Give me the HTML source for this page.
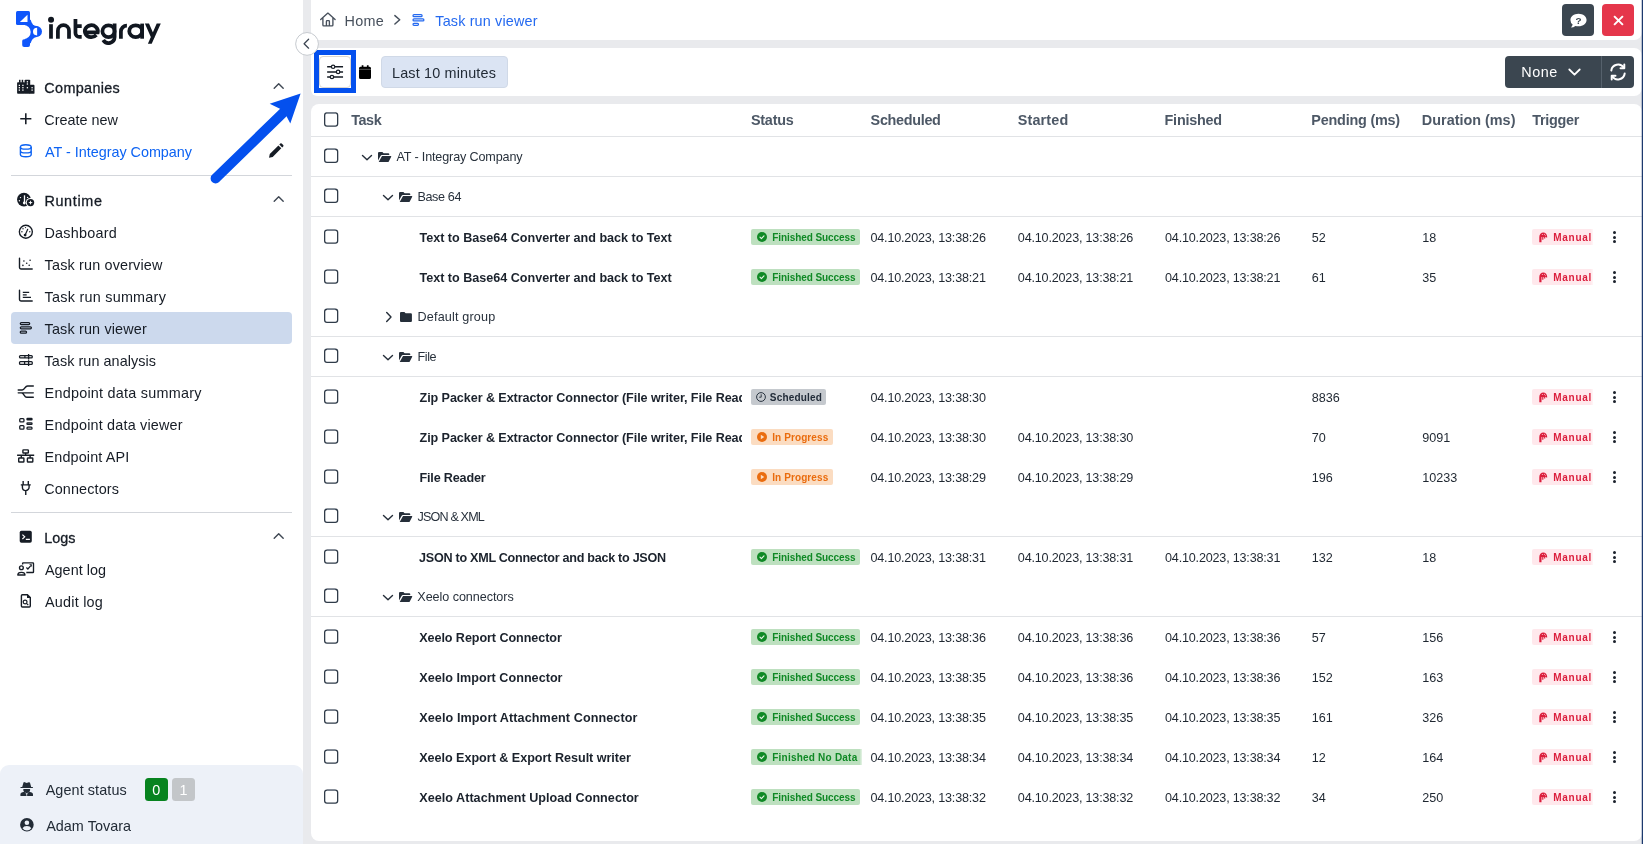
<!DOCTYPE html>
<html lang="en">
<head>
<meta charset="utf-8">
<title>Task run viewer</title>
<style>
*{box-sizing:border-box;margin:0;padding:0}
html,body{width:1643px;height:844px;overflow:hidden}
body{position:relative;background:#e9eaed;font-family:"Liberation Sans",sans-serif;color:#1b222c;font-size:14px}
#app{position:absolute;left:0;top:0;width:1643px;height:844px;overflow:hidden;will-change:transform}
.abs{position:absolute}
svg{display:block;overflow:visible}
.t{position:absolute;line-height:20px;white-space:nowrap}
.hd{-webkit-text-stroke:.3px #161c25}
.cb{position:absolute;left:324px;width:15px;height:15px;border:1.5px solid #39424e;border-radius:3px;background:#fff}
.ln{position:absolute;left:311px;width:1332px;height:1px;background:#e1e3e6}
.bdg{position:absolute;left:751px;height:16px;border-radius:2px}
.dots{position:absolute;left:1612px;width:4px;height:12px}
.dots i{position:absolute;left:.5px;width:3px;height:3px;border-radius:50%;background:#1b222c}
</style>
</head>
<body>
<div id="app">
<div class="abs" style="left:0px;top:0px;width:303px;height:844px;background:#fff"></div>
<div class="abs" style="left:311px;top:0px;width:1331px;height:40px;background:#fff;border-radius:0 0 8px 8px"></div>
<div class="abs" style="left:311px;top:48px;width:1331px;height:48px;background:#fff;border-radius:6px 8px 8px 6px"></div>
<div class="abs" style="left:311px;top:103.6px;width:1331px;height:737.4px;background:#fff;border-radius:8px"></div>
<div class="abs" style="left:0px;top:765px;width:303px;height:79px;background:#edf1f8;border-radius:9px 9px 0 0"></div>
<div class="abs" style="left:11px;top:312px;width:281px;height:31.5px;background:#ccd9ed;border-radius:4px"></div>
<div class="abs" style="left:11px;top:175px;width:281px;height:1px;background:#d3d6db"></div>
<div class="abs" style="left:11px;top:512px;width:281px;height:1px;background:#d3d6db"></div>
<svg class="abs" style="left:0;top:0" width="175" height="56" viewBox="0 0 175 56">
<path d="M25 24L30 19.5L38 27v9L30 43.5L25 40z" fill="#0f56fb"/>
<g fill="#fff"><circle cx="23.6" cy="32.1" r="7.1"/><circle cx="37.3" cy="19.6" r="6.4"/><circle cx="37.3" cy="43.5" r="6.4"/></g>
<g fill="#0f56fb">
<rect x="16" y="10.9" width="14" height="14.1" rx="1.5"/>
<circle cx="36.65" cy="31.45" r="5.35"/>
<rect x="22.2" y="39.2" width="7.8" height="7.7" rx="1.9"/>
</g>
<path d="M19.9 22.1l7.6-7.3v7.3z" fill="#fff"/>
<path d="M37.1 27.7a4.1 3.85 0 0 0 0 7.7z" fill="#fff"/>
<g fill="none" stroke="#111720" stroke-width="3.75">
<path d="M51 24.2V38.7"/>
<path d="M57.9 38.7V30.8A5.55 5.55 0 0 1 69 30.8V38.7"/>
<path d="M75.45 19.1V33.1A3.8 3.8 0 0 0 79.25 36.9H81.7M75.45 26H81.7"/>
<path d="M85.2 32.3H97.74A6.5 5.95 0 1 0 96.33 35.02"/>
<ellipse cx="108.5" cy="31.2" rx="6.1" ry="5.95"/>
<path d="M114.6 23.6V37A6.15 6.15 0 0 1 103.2 40.1"/>
<path d="M120.9 38.7V31.6A6 6 0 0 1 126.9 25.6"/>
<ellipse cx="135.7" cy="31.2" rx="6.45" ry="5.95"/>
<path d="M142.15 23.6V38.7"/>
</g>
<path d="M144.9 23.4h4.1l6 13.9h-4.1zM156.7 23.4h4.1l-9.1 20.4h-3.8z" fill="#111720"/>
<circle cx="51.05" cy="19.7" r="3" fill="#111720"/>
</svg>
<div class="t hd" style="left:44.34px;top:78px;font-size:14.4px;letter-spacing:0.336px;color:#161c25;">Companies</div>
<div class="t" style="left:44.34px;top:110px;font-size:14.4px;letter-spacing:-0.008px;color:#161c25;">Create new</div>
<div class="t" style="left:45.00px;top:142px;font-size:14.4px;letter-spacing:-0.021px;color:#0d63f3;">AT - Integray Company</div>
<div class="t hd" style="left:44.45px;top:191px;font-size:14.4px;letter-spacing:0.643px;color:#161c25;">Runtime</div>
<div class="t" style="left:44.45px;top:223px;font-size:14.4px;letter-spacing:0.242px;color:#161c25;">Dashboard</div>
<div class="t" style="left:44.61px;top:255px;font-size:14.4px;letter-spacing:0.163px;color:#161c25;">Task run overview</div>
<div class="t" style="left:44.61px;top:287px;font-size:14.4px;letter-spacing:0.245px;color:#161c25;">Task run summary</div>
<div class="t" style="left:44.61px;top:319px;font-size:14.4px;letter-spacing:0.154px;color:#161c25;">Task run viewer</div>
<div class="t" style="left:44.61px;top:351px;font-size:14.4px;letter-spacing:0.059px;color:#161c25;">Task run analysis</div>
<div class="t" style="left:44.60px;top:383px;font-size:14.4px;letter-spacing:0.245px;color:#161c25;">Endpoint data summary</div>
<div class="t" style="left:44.60px;top:415px;font-size:14.4px;letter-spacing:0.185px;color:#161c25;">Endpoint data viewer</div>
<div class="t" style="left:44.60px;top:447px;font-size:14.4px;letter-spacing:0.13px;color:#161c25;">Endpoint API</div>
<div class="t" style="left:44.18px;top:479px;font-size:14.4px;letter-spacing:0.13px;color:#161c25;">Connectors</div>
<div class="t hd" style="left:44.25px;top:528px;font-size:14.4px;letter-spacing:-0.019px;color:#161c25;">Logs</div>
<div class="t" style="left:44.90px;top:560px;font-size:14.4px;letter-spacing:0.045px;color:#161c25;">Agent log</div>
<div class="t" style="left:44.90px;top:592px;font-size:14.4px;letter-spacing:0.248px;color:#161c25;">Audit log</div>
<svg class="abs" style="left:0;top:0" width="303" height="844" viewBox="0 0 303 844">
<g fill="#161c25"><rect x="17.1" y="82.3" width="8" height="11.5" rx=".8"/><rect x="19" y="79.8" width="1.5" height="3"/><rect x="21.7" y="79.8" width="1.5" height="3"/><rect x="24.6" y="79.7" width="5.6" height="14.1" rx=".9"/><rect x="29.5" y="84.8" width="5" height="9" rx=".9"/></g>
<g fill="#fff"><rect x="18.70" y="84.75" width="1.3" height="1.3"/><rect x="18.70" y="87.05" width="1.3" height="1.3"/><rect x="18.70" y="89.45" width="1.3" height="1.3"/><rect x="22.25" y="84.75" width="1.3" height="1.3"/><rect x="22.25" y="87.05" width="1.3" height="1.3"/><rect x="22.25" y="89.45" width="1.3" height="1.3"/><rect x="26.75" y="81.15" width="1.3" height="1.3"/><rect x="26.75" y="83.35" width="1.3" height="1.3"/><rect x="26.75" y="87.05" width="1.3" height="1.3"/><rect x="31.45" y="87.05" width="1.3" height="1.3"/><rect x="31.45" y="89.45" width="1.3" height="1.3"/></g>
<path d="M25.8 113.2v11.1M20.25 118.75h11.1" stroke="#161c25" stroke-width="1.55" fill="none"/>
<g fill="none" stroke="#0d63f3" stroke-width="1.4"><ellipse cx="25.8" cy="146.9" rx="5.4" ry="2.2"/><path d="M20.4 146.9v7.6c0 1.2 2.4 2.2 5.4 2.2s5.4-1 5.4-2.2v-7.6M20.4 150.7c0 1.2 2.4 2.2 5.4 2.2s5.4-1 5.4-2.2"/></g>
<circle cx="23.95" cy="199.6" r="6.9" fill="#161c25"/><path d="M24.5 195.3v7" stroke="#fff" stroke-width="1.3"/><circle cx="24.3" cy="203" r="1.4" fill="#fff"/><g fill="#fff"><circle cx="20.5" cy="197.6" r=".7"/><circle cx="27.6" cy="197.4" r=".7"/><circle cx="19.4" cy="200.8" r=".7"/></g>
<circle cx="30.5" cy="202.6" r="4.7" fill="#fff"/><circle cx="30.5" cy="202.6" r="3.7" fill="#161c25"/><path d="M30.5 200.3l.6 1.7 1.7.6-1.7.6-.6 1.7-.6-1.7-1.7-.6 1.7-.6z" fill="#fff"/>
<g fill="none" stroke="#161c25" stroke-width="1.35"><circle cx="25.85" cy="231.75" r="6.5"/><path d="M25.3 234.8l2.4-5.5" stroke-width="1.2" stroke-linecap="round"/></g><circle cx="25.1" cy="235.1" r="1.4" fill="#161c25"/><g fill="#161c25"><circle cx="21.9" cy="231.8" r=".7"/><circle cx="23" cy="228.8" r=".7"/><circle cx="25.5" cy="227.6" r=".7"/><circle cx="29.8" cy="231.8" r=".7"/></g>
<g fill="none" stroke="#161c25" stroke-width="1.4" stroke-linecap="round"><path d="M19.5 258.3v9.3q0 1.4 1.4 1.4h11.3"/><path d="M19.5 290.3v9.3q0 1.4 1.4 1.4h11.3"/><path d="M22.8 292.4h6.4M22.8 294.9h3.9M22.8 297.4h8.2" stroke-width="1.3" stroke-linecap="butt"/></g>
<g fill="#161c25"><circle cx="23.9" cy="261" r=".8"/><circle cx="30.1" cy="260.2" r=".8"/><circle cx="26.7" cy="263.3" r=".8"/><circle cx="22.9" cy="265.4" r=".8"/><circle cx="29.2" cy="265.3" r=".8"/></g>
<g fill="none" stroke="#161c25" stroke-width="1.25"><rect x="20.3" y="322.55" width="9.4" height="2" rx="1"/><rect x="20.3" y="326.8" width="11.1" height="2" rx="1"/><rect x="20.3" y="331.15" width="6.2" height="1.95" rx=".97"/></g>
<g fill="none" stroke="#161c25" stroke-width="1.3"><rect x="19.55" y="355.55" width="12.7" height="2.4" rx=".9"/><rect x="19.55" y="361.65" width="12.7" height="2.7" rx=".9"/><path d="M24.9 355.5v2.5M28.6 354v5.6M24.6 361.6v2.8M28.6 360.2v5.7"/></g>
<path d="M18.2 390h4c2.8 0 2.6-4.05 5.4-4.05h5.7M18.2 392.85h15.1M21.4 392.85c2.8 0 2.6 4.35 5.4 4.35h6.5" fill="none" stroke="#161c25" stroke-width="1.4" stroke-linecap="round"/>
<g fill="none" stroke="#161c25" stroke-width="1.3"><rect x="19.75" y="418.55" width="4.2" height="3.4" rx=".9"/><rect x="19.75" y="425.65" width="4.2" height="3.4" rx=".9"/><rect x="26.95" y="418.5" width="5.1" height="1.3" rx=".65"/><rect x="26.95" y="422.9" width="5.1" height="1.5" rx=".75"/><rect x="26.95" y="427.2" width="5.1" height="1.9" rx=".95"/></g>
<g fill="none" stroke="#161c25" stroke-width="1.4"><rect x="22.9" y="449.9" width="5.45" height="3.1" rx=".6"/><path d="M17.1 455.3h17.1M25.65 453v2.3M21.3 455.3v2.7M30.1 455.3v2.7"/><rect x="18.7" y="458" width="5.2" height="4" rx=".6"/><rect x="27.4" y="458" width="5.4" height="4" rx=".6"/></g>
<path d="M23.15 481.1v3.3M28.3 481.1v3.3M20.8 484.9h9.95M22.4 485v2.25a3.35 3.35 0 0 0 6.7 0V485M25.75 490.8v4.1" fill="none" stroke="#161c25" stroke-width="1.4"/>
<rect x="19.7" y="530.7" width="12.1" height="12.05" rx="1.7" fill="#161c25"/><path d="M22.4 534.65l2.3 2.2-2.3 2.2M25.8 539.3h4.1" fill="none" stroke="#fff" stroke-width="1.2"/>
<g fill="none" stroke="#161c25" stroke-width="1.35"><path d="M22.6 564.6v-1.1q0-.6.6-.6h9.7q.6 0 .6.6v8.4q0 .6-.6.6H26.3"/><circle cx="21.4" cy="567.7" r="1.9"/><path d="M17.8 575q0-2.7 3.6-2.7t3.6 2.7z" stroke-linejoin="round"/><path d="M26.4 567.5l1.5 1.5 2.7-3.2" stroke-width="1.2"/></g><path d="M29.2 564.3h2.6v2.6z" fill="#161c25"/>
<g fill="none" stroke="#161c25" stroke-width="1.4"><path d="M22.4 594.7h5l2.9 2.9v8.4q0 1-1 1h-6.9q-1 0-1-1v-10.3q0-1 1-1z"/><circle cx="25.1" cy="602" r="1.9" stroke-width="1.2"/><path d="M26.5 603.4l1.8 1.7" stroke-width="1.2"/></g><path d="M27 594.3v3.7h3.7z" fill="#161c25"/>
<path d="M274.2 88.20l4.5-4.5 4.5 4.5" fill="none" stroke="#3f4753" stroke-width="1.4" stroke-linecap="round" stroke-linejoin="round"/><path d="M274.2 201.30l4.5-4.5 4.5 4.5" fill="none" stroke="#3f4753" stroke-width="1.4" stroke-linecap="round" stroke-linejoin="round"/><path d="M274.2 538.20l4.5-4.5 4.5 4.5" fill="none" stroke="#3f4753" stroke-width="1.4" stroke-linecap="round" stroke-linejoin="round"/>
<path fill="#161c25" d="M269 157.7l.8-3.7 8.6-8.6 2.9 2.9-8.6 8.6zM279.3 144.5l1-1q.7-.7 1.4 0l1.5 1.5q.7.7 0 1.4l-1 1z"/>
<path fill="#222b36" d="M22.2 787l1.2-4.2q.3-.9 1.2-.6l1.5.6q.6.2 1.2 0l1.5-.6q.9-.3 1.2.6l1.2 4.2h1.3q.5 0 .5.5t-.5.5H20.9q-.5 0-.5-.5t.5-.5zM23.6 789h6.2q.4 0 .4.4 0 1.4-.9 2.3l2.4.8q1.3.5 1.3 1.9v1.1q0 .5-.5.5H20.9q-.5 0-.5-.5v-1.1q0-1.4 1.3-1.9l2.4-.8q-.9-.9-.9-2.3 0-.4.4-.4z"/><path d="M25.5 792.7l1.2 1.2 1.2-1.2M26.7 793.9v1.8" stroke="#edf1f8" stroke-width=".9" fill="none"/>
<circle cx="26.9" cy="824.7" r="6.8" fill="#222b36"/><circle cx="26.9" cy="822.8" r="2.3" fill="#edf1f8"/><path d="M22.5 828.3q1.1-2.2 4.4-2.2t4.4 2.2q-1.7 2.2-4.4 2.2t-4.4-2.2z" fill="#edf1f8"/>
</svg>
<div class="t" style="left:45.67px;top:780px;font-size:14.4px;letter-spacing:0.093px;color:#222b36;">Agent status</div>
<div class="abs" style="left:145px;top:778px;width:23px;height:23px;background:#07831f;border-radius:3.5px"></div>
<div class="abs" style="left:172px;top:778px;width:23px;height:23px;background:#c3c6c9;border-radius:3.5px"></div>
<div class="t" style="left:152.16px;top:780px;font-size:14.4px;letter-spacing:0.0px;color:#fff;">0</div>
<div class="t" style="left:179.42px;top:780px;font-size:14.4px;letter-spacing:0.0px;color:#fff;">1</div>
<div class="t" style="left:46.15px;top:816px;font-size:14.4px;letter-spacing:0.035px;color:#222b36;">Adam Tovara</div>
<svg class="abs" style="left:318px;top:8px" width="110" height="24" viewBox="318 8 110 24"><g fill="none" stroke="#47505c" stroke-width="1.35" stroke-linecap="round" stroke-linejoin="round"><path d="M320.7 19.5L327.9 13.1L335.1 19.5M322.9 18.3V25q0 .9.9.9h8.2q.9 0 .9-.9V18.3M326.4 25.9v-4.5q0-.7.7-.7h1.6q.7 0 .7.7v4.5"/><path d="M394.9 15.6L399.7 19.8L394.9 24" stroke-width="1.5"/></g><g fill="none" stroke="#256af0" stroke-width="1.25"><rect x="413" y="14.7" width="9.1" height="2" rx="1"/><rect x="413" y="18.95" width="10.9" height="2" rx="1"/><rect x="413" y="23.3" width="5.5" height="1.95" rx=".97"/></g></svg>
<div class="t" style="left:344.45px;top:11px;font-size:14.4px;letter-spacing:0.317px;color:#47505c;">Home</div>
<div class="t" style="left:435.31px;top:11px;font-size:14.4px;letter-spacing:0.154px;color:#256af0;">Task run viewer</div>
<div class="abs" style="left:1562px;top:4px;width:32px;height:31.5px;background:#3b4650;border-radius:4px"></div>
<svg class="abs" style="left:1567.5px;top:10.6px" width="21" height="21" viewBox="0 0 19 19"><path d="M9.5 2.5c4.2 0 7.3 2.5 7.3 5.7s-3.1 5.7-7.3 5.7q-1.5 0-2.8-.4-1.7 1.3-4 1.5 1.2-1.3 1.5-2.7-2-1.6-2-4.1c0-3.2 3.1-5.7 7.3-5.7z" fill="#fff"/><text x="9.6" y="11.6" font-family="Liberation Sans" font-weight="bold" font-size="9" text-anchor="middle" fill="#3b4650">?</text></svg>
<div class="abs" style="left:1602px;top:4px;width:32px;height:31.5px;background:#e5364b;border-radius:4px"></div>
<svg class="abs" style="left:1612.5px;top:14.55px" width="11" height="11" viewBox="0 0 11 11"><path d="M1.1 1.1l8.8 8.8M9.9 1.1l-8.8 8.8" stroke="#fff" stroke-width="2" fill="none"/></svg>
<div class="abs" style="left:314px;top:50px;width:42px;height:43px;border:5px solid #0450ee"></div>
<div class="abs" style="left:319px;top:55.5px;width:32px;height:32px;border:1px solid #dcd7cf;border-radius:4px;background:#fff"></div>
<svg class="abs" style="left:320px;top:60px" width="30" height="24" viewBox="320 60 30 24"><g fill="#fff" stroke="#161c25" stroke-width="1.45"><path d="M327.15 66.8h15.9M327.15 71.9h15.9M327.15 77h15.9"/><circle cx="333.1" cy="66.8" r="1.7" stroke-width="1.2"/><circle cx="338.1" cy="71.9" r="1.7" stroke-width="1.2"/><circle cx="331.95" cy="77" r="1.7" stroke-width="1.2"/></g></svg>
<svg class="abs" style="left:359px;top:65px" width="12" height="14" viewBox="0 0 12 14"><path fill="#000" d="M2.7 .2h1.7v1.5h3.5V.2h1.7v1.5h.9q1.5 0 1.5 1.5V12.4q0 1.5-1.5 1.5H1.5Q0 13.9 0 12.4V3.2q0-1.5 1.5-1.5h1.2z"/><rect x="0" y="3.9" width="12" height=".7" fill="#777"/></svg>
<div class="abs" style="left:381px;top:56px;width:127px;height:31.5px;background:#dbe4f3;border:1px solid #d0d9e7;border-radius:4px"></div>
<div class="t" style="left:392.05px;top:63px;font-size:14.4px;letter-spacing:0.157px;color:#222b36;">Last 10 minutes</div>
<div class="abs" style="left:1505px;top:56px;width:129px;height:32px;background:#3b4650;border-radius:4px"></div>
<div class="abs" style="left:1601px;top:56px;width:1px;height:32px;background:#56616c"></div>
<div class="t" style="left:1521.30px;top:62px;font-size:14.4px;letter-spacing:0.549px;color:#fff;">None</div>
<svg class="abs" style="left:1568.4px;top:68px" width="13" height="9" viewBox="0 0 13 9"><path d="M1.3 1.5l5.2 5.2 5.2-5.2" fill="none" stroke="#fff" stroke-width="1.8" stroke-linecap="round" stroke-linejoin="round"/></svg>
<svg class="abs" style="left:1609px;top:63px" width="18" height="18" viewBox="0 0 18 18"><g fill="none" stroke="#fff" stroke-width="1.95" stroke-linecap="round" stroke-linejoin="round"><path d="M2.3 7.5A6.8 6.8 0 0 1 14.8 4.8M15.7 10.5A6.8 6.8 0 0 1 3.2 13.2"/><path d="M15.3 1.5v3.8h-3.8M2.7 16.5v-3.8h3.8"/></g></svg>

<div class="t" style="left:351.16px;top:110px;font-size:14.4px;letter-spacing:-0.415px;color:#4d5866;font-weight:bold;">Task</div>
<div class="t" style="left:750.90px;top:110px;font-size:14.4px;letter-spacing:-0.211px;color:#4d5866;font-weight:bold;">Status</div>
<div class="t" style="left:870.60px;top:110px;font-size:14.4px;letter-spacing:-0.308px;color:#4d5866;font-weight:bold;">Scheduled</div>
<div class="t" style="left:1017.80px;top:110px;font-size:14.4px;letter-spacing:0.137px;color:#4d5866;font-weight:bold;">Started</div>
<div class="t" style="left:1164.56px;top:110px;font-size:14.4px;letter-spacing:-0.23px;color:#4d5866;font-weight:bold;">Finished</div>
<div class="t" style="left:1311.36px;top:110px;font-size:14.4px;letter-spacing:-0.215px;color:#4d5866;font-weight:bold;">Pending (ms)</div>
<div class="t" style="left:1421.86px;top:110px;font-size:14.4px;letter-spacing:0.002px;color:#4d5866;font-weight:bold;">Duration (ms)</div>
<div class="t" style="left:1532.26px;top:110px;font-size:14.4px;letter-spacing:-0.276px;color:#4d5866;font-weight:bold;">Trigger</div>
<div class="ln" style="top:136px"></div>

<div class="abs" style="left:360.5px;top:153.5px"><svg width="12" height="8" viewBox="0 0 12 8"><path d="M1.5 1.4L6 5.7l4.5-4.3" fill="none" stroke="#252e39" stroke-width="1.4" stroke-linecap="round" stroke-linejoin="round"/></svg></div>
<div class="abs" style="left:377.8px;top:151.60000000000002px"><svg width="13.4" height="10.1" viewBox="0 0 15 12" preserveAspectRatio="none"><path fill="#252e39" d="M1.3 0h3.6l1.4 1.4h5.2q1.1 0 1.1 1.1v1.2H4.3q-.9 0-1.3.8L0 10V1.3Q0 0 1.3 0zM4.5 4.8h9.8q.9 0 .5.8l-2.7 5.6q-.4.8-1.3.8H.8z"/></svg></div>
<div class="t" style="left:396.40px;top:147px;font-size:12.6px;letter-spacing:-0.144px;color:#28313c;">AT - Integray Company</div>
<div class="ln" style="top:176px"></div>

<div class="abs" style="left:382px;top:193.5px"><svg width="12" height="8" viewBox="0 0 12 8"><path d="M1.5 1.4L6 5.7l4.5-4.3" fill="none" stroke="#252e39" stroke-width="1.4" stroke-linecap="round" stroke-linejoin="round"/></svg></div>
<div class="abs" style="left:399.25px;top:191.60000000000002px"><svg width="13.4" height="10.1" viewBox="0 0 15 12" preserveAspectRatio="none"><path fill="#252e39" d="M1.3 0h3.6l1.4 1.4h5.2q1.1 0 1.1 1.1v1.2H4.3q-.9 0-1.3.8L0 10V1.3Q0 0 1.3 0zM4.5 4.8h9.8q.9 0 .5.8l-2.7 5.6q-.4.8-1.3.8H.8z"/></svg></div>
<div class="t" style="left:417.49px;top:187px;font-size:12.6px;letter-spacing:-0.384px;color:#28313c;">Base 64</div>
<div class="ln" style="top:216px"></div>

<div class="t" style="left:419.47px;top:228px;font-size:12.6px;letter-spacing:-0.014px;color:#1b222c;font-weight:bold;">Text to Base64 Converter and back to Text</div>
<div class="bdg" style="top:229px;width:109px;background:#bde0bf"></div>
<div class="abs" style="left:757.1px;top:231.9px"><svg width="10" height="10" viewBox="0 0 10 10"><circle cx="5" cy="5" r="5" fill="#0f8925"/><path d="M3 5.2l1.4 1.4 2.6-2.8" fill="none" stroke="#e4f3e5" stroke-width="1.15" stroke-linecap="round" stroke-linejoin="round"/></svg></div>
<div class="t" style="left:772.25px;top:228px;font-size:10px;letter-spacing:-0.083px;color:#0f8925;font-weight:bold;">Finished Success</div>
<div class="t" style="left:870.49px;top:228px;font-size:12.6px;letter-spacing:-0.192px;color:#1f2731;">04.10.2023, 13:38:26</div>
<div class="t" style="left:1017.83px;top:228px;font-size:12.6px;letter-spacing:-0.192px;color:#1f2731;">04.10.2023, 13:38:26</div>
<div class="t" style="left:1165.03px;top:228px;font-size:12.6px;letter-spacing:-0.192px;color:#1f2731;">04.10.2023, 13:38:26</div>
<div class="t" style="left:1311.81px;top:228px;font-size:12.6px;letter-spacing:0.0px;color:#1f2731;">52</div>
<div class="t" style="left:1422.21px;top:228px;font-size:12.6px;letter-spacing:0.0px;color:#1f2731;">18</div>
<div class="abs" style="left:1532px;top:229px;width:61px;height:16px;border-radius:2px 0 0 2px;background:linear-gradient(to right,#ffe8ec 58.5px,#fff6f7 61px)"></div>
<div class="abs" style="left:1539px;top:231.9px"><svg width="10" height="11" viewBox="0 0 10 11"><path fill="#dc1f3d" d="M.3 4.9a3.95 4.5 0 0 1 7.9 0V5.6H7.1V4.9H6.3V6.6H5.1V4.9H4.4V7.8H3.2V4.9H2.5V10.2H.3z"/><g fill="#ffe7eb"><circle cx="3.3" cy="2.6" r=".5"/><circle cx="5.4" cy="2.3" r=".5"/><circle cx="6.6" cy="3.7" r=".45"/></g></svg></div>
<div class="t" style="left:1553.25px;top:228px;font-size:10px;letter-spacing:0.72px;color:#dc1f3d;font-weight:bold;">Manual</div>
<div class="dots" style="top:231px"><i style="top:0"></i><i style="top:4.5px"></i><i style="top:9px"></i></div>

<div class="t" style="left:419.47px;top:268px;font-size:12.6px;letter-spacing:-0.014px;color:#1b222c;font-weight:bold;">Text to Base64 Converter and back to Text</div>
<div class="bdg" style="top:269px;width:109px;background:#bde0bf"></div>
<div class="abs" style="left:757.1px;top:271.90000000000003px"><svg width="10" height="10" viewBox="0 0 10 10"><circle cx="5" cy="5" r="5" fill="#0f8925"/><path d="M3 5.2l1.4 1.4 2.6-2.8" fill="none" stroke="#e4f3e5" stroke-width="1.15" stroke-linecap="round" stroke-linejoin="round"/></svg></div>
<div class="t" style="left:772.25px;top:268px;font-size:10px;letter-spacing:-0.083px;color:#0f8925;font-weight:bold;">Finished Success</div>
<div class="t" style="left:870.49px;top:268px;font-size:12.6px;letter-spacing:-0.192px;color:#1f2731;">04.10.2023, 13:38:21</div>
<div class="t" style="left:1017.83px;top:268px;font-size:12.6px;letter-spacing:-0.192px;color:#1f2731;">04.10.2023, 13:38:21</div>
<div class="t" style="left:1165.03px;top:268px;font-size:12.6px;letter-spacing:-0.192px;color:#1f2731;">04.10.2023, 13:38:21</div>
<div class="t" style="left:1311.81px;top:268px;font-size:12.6px;letter-spacing:0.0px;color:#1f2731;">61</div>
<div class="t" style="left:1422.21px;top:268px;font-size:12.6px;letter-spacing:0.0px;color:#1f2731;">35</div>
<div class="abs" style="left:1532px;top:269px;width:61px;height:16px;border-radius:2px 0 0 2px;background:linear-gradient(to right,#ffe8ec 58.5px,#fff6f7 61px)"></div>
<div class="abs" style="left:1539px;top:271.90000000000003px"><svg width="10" height="11" viewBox="0 0 10 11"><path fill="#dc1f3d" d="M.3 4.9a3.95 4.5 0 0 1 7.9 0V5.6H7.1V4.9H6.3V6.6H5.1V4.9H4.4V7.8H3.2V4.9H2.5V10.2H.3z"/><g fill="#ffe7eb"><circle cx="3.3" cy="2.6" r=".5"/><circle cx="5.4" cy="2.3" r=".5"/><circle cx="6.6" cy="3.7" r=".45"/></g></svg></div>
<div class="t" style="left:1553.25px;top:268px;font-size:10px;letter-spacing:0.72px;color:#dc1f3d;font-weight:bold;">Manual</div>
<div class="dots" style="top:271px"><i style="top:0"></i><i style="top:4.5px"></i><i style="top:9px"></i></div>

<div class="abs" style="left:384.85px;top:310.5px"><svg width="8" height="12" viewBox="0 0 8 12"><path d="M1.7 1.5L6 6 1.7 10.5" fill="none" stroke="#252e39" stroke-width="1.4" stroke-linecap="round" stroke-linejoin="round"/></svg></div>
<div class="abs" style="left:400.2px;top:311.6px"><svg width="12.1" height="10.1" viewBox="0 0 14 12" preserveAspectRatio="none"><path fill="#252e39" d="M1.3 0h3.8l1.4 1.5h6q1.3 0 1.3 1.3v7.9q0 1.3-1.3 1.3H1.3Q0 12 0 10.7V1.3Q0 0 1.3 0z"/></svg></div>
<div class="t" style="left:417.59px;top:307px;font-size:12.6px;letter-spacing:0.169px;color:#28313c;">Default group</div>
<div class="ln" style="top:336px"></div>

<div class="abs" style="left:382px;top:353.5px"><svg width="12" height="8" viewBox="0 0 12 8"><path d="M1.5 1.4L6 5.7l4.5-4.3" fill="none" stroke="#252e39" stroke-width="1.4" stroke-linecap="round" stroke-linejoin="round"/></svg></div>
<div class="abs" style="left:399.25px;top:351.6px"><svg width="13.4" height="10.1" viewBox="0 0 15 12" preserveAspectRatio="none"><path fill="#252e39" d="M1.3 0h3.6l1.4 1.4h5.2q1.1 0 1.1 1.1v1.2H4.3q-.9 0-1.3.8L0 10V1.3Q0 0 1.3 0zM4.5 4.8h9.8q.9 0 .5.8l-2.7 5.6q-.4.8-1.3.8H.8z"/></svg></div>
<div class="t" style="left:417.59px;top:347px;font-size:12.6px;letter-spacing:-0.414px;color:#28313c;">File</div>
<div class="ln" style="top:376px"></div>

<div class="abs" style="left:415px;top:385px;width:327.3px;height:24px;overflow:hidden"><div class="t" style="left:4.55px;top:3px;font-size:12.6px;letter-spacing:-0.079px;color:#1b222c;font-weight:bold;">Zip Packer &amp; Extractor Connector (File writer, File Reader)</div></div>
<div class="bdg" style="top:389px;width:75px;background:#c5c9ce"></div>
<div class="abs" style="left:755.9px;top:391.90000000000003px"><svg width="10" height="10" viewBox="0 0 10 10"><circle cx="5" cy="5" r="4.4" fill="none" stroke="#222c39" stroke-width=".95"/><path d="M5.2 2.3V5.2H3.2" fill="none" stroke="#222c39" stroke-width=".9"/></svg></div>
<div class="t" style="left:769.83px;top:388px;font-size:10px;letter-spacing:0.172px;color:#222c39;font-weight:bold;">Scheduled</div>
<div class="t" style="left:870.49px;top:388px;font-size:12.6px;letter-spacing:-0.192px;color:#1f2731;">04.10.2023, 13:38:30</div>
<div class="t" style="left:1311.81px;top:388px;font-size:12.6px;letter-spacing:0.0px;color:#1f2731;">8836</div>
<div class="abs" style="left:1532px;top:389px;width:61px;height:16px;border-radius:2px 0 0 2px;background:linear-gradient(to right,#ffe8ec 58.5px,#fff6f7 61px)"></div>
<div class="abs" style="left:1539px;top:391.90000000000003px"><svg width="10" height="11" viewBox="0 0 10 11"><path fill="#dc1f3d" d="M.3 4.9a3.95 4.5 0 0 1 7.9 0V5.6H7.1V4.9H6.3V6.6H5.1V4.9H4.4V7.8H3.2V4.9H2.5V10.2H.3z"/><g fill="#ffe7eb"><circle cx="3.3" cy="2.6" r=".5"/><circle cx="5.4" cy="2.3" r=".5"/><circle cx="6.6" cy="3.7" r=".45"/></g></svg></div>
<div class="t" style="left:1553.25px;top:388px;font-size:10px;letter-spacing:0.72px;color:#dc1f3d;font-weight:bold;">Manual</div>
<div class="dots" style="top:391px"><i style="top:0"></i><i style="top:4.5px"></i><i style="top:9px"></i></div>

<div class="abs" style="left:415px;top:425px;width:327.3px;height:24px;overflow:hidden"><div class="t" style="left:4.55px;top:3px;font-size:12.6px;letter-spacing:-0.079px;color:#1b222c;font-weight:bold;">Zip Packer &amp; Extractor Connector (File writer, File Reader)</div></div>
<div class="bdg" style="top:429px;width:82px;background:#fbdcc1"></div>
<div class="abs" style="left:757.2px;top:431.90000000000003px"><svg width="10" height="10" viewBox="0 0 10 10"><circle cx="5" cy="5" r="5" fill="#ea6c0e"/><path d="M3.8 2.8L7.3 5 3.8 7.2z" fill="#fcdcc0"/></svg></div>
<div class="t" style="left:772.25px;top:428px;font-size:10px;letter-spacing:0.092px;color:#ea6c0e;font-weight:bold;">In Progress</div>
<div class="t" style="left:870.49px;top:428px;font-size:12.6px;letter-spacing:-0.192px;color:#1f2731;">04.10.2023, 13:38:30</div>
<div class="t" style="left:1017.83px;top:428px;font-size:12.6px;letter-spacing:-0.192px;color:#1f2731;">04.10.2023, 13:38:30</div>
<div class="t" style="left:1311.81px;top:428px;font-size:12.6px;letter-spacing:0.0px;color:#1f2731;">70</div>
<div class="t" style="left:1422.21px;top:428px;font-size:12.6px;letter-spacing:0.0px;color:#1f2731;">9091</div>
<div class="abs" style="left:1532px;top:429px;width:61px;height:16px;border-radius:2px 0 0 2px;background:linear-gradient(to right,#ffe8ec 58.5px,#fff6f7 61px)"></div>
<div class="abs" style="left:1539px;top:431.90000000000003px"><svg width="10" height="11" viewBox="0 0 10 11"><path fill="#dc1f3d" d="M.3 4.9a3.95 4.5 0 0 1 7.9 0V5.6H7.1V4.9H6.3V6.6H5.1V4.9H4.4V7.8H3.2V4.9H2.5V10.2H.3z"/><g fill="#ffe7eb"><circle cx="3.3" cy="2.6" r=".5"/><circle cx="5.4" cy="2.3" r=".5"/><circle cx="6.6" cy="3.7" r=".45"/></g></svg></div>
<div class="t" style="left:1553.25px;top:428px;font-size:10px;letter-spacing:0.72px;color:#dc1f3d;font-weight:bold;">Manual</div>
<div class="dots" style="top:431px"><i style="top:0"></i><i style="top:4.5px"></i><i style="top:9px"></i></div>

<div class="t" style="left:419.48px;top:468px;font-size:12.6px;letter-spacing:-0.164px;color:#1b222c;font-weight:bold;">File Reader</div>
<div class="bdg" style="top:469px;width:82px;background:#fbdcc1"></div>
<div class="abs" style="left:757.2px;top:471.90000000000003px"><svg width="10" height="10" viewBox="0 0 10 10"><circle cx="5" cy="5" r="5" fill="#ea6c0e"/><path d="M3.8 2.8L7.3 5 3.8 7.2z" fill="#fcdcc0"/></svg></div>
<div class="t" style="left:772.25px;top:468px;font-size:10px;letter-spacing:0.092px;color:#ea6c0e;font-weight:bold;">In Progress</div>
<div class="t" style="left:870.49px;top:468px;font-size:12.6px;letter-spacing:-0.192px;color:#1f2731;">04.10.2023, 13:38:29</div>
<div class="t" style="left:1017.83px;top:468px;font-size:12.6px;letter-spacing:-0.192px;color:#1f2731;">04.10.2023, 13:38:29</div>
<div class="t" style="left:1311.81px;top:468px;font-size:12.6px;letter-spacing:0.0px;color:#1f2731;">196</div>
<div class="t" style="left:1422.21px;top:468px;font-size:12.6px;letter-spacing:0.0px;color:#1f2731;">10233</div>
<div class="abs" style="left:1532px;top:469px;width:61px;height:16px;border-radius:2px 0 0 2px;background:linear-gradient(to right,#ffe8ec 58.5px,#fff6f7 61px)"></div>
<div class="abs" style="left:1539px;top:471.90000000000003px"><svg width="10" height="11" viewBox="0 0 10 11"><path fill="#dc1f3d" d="M.3 4.9a3.95 4.5 0 0 1 7.9 0V5.6H7.1V4.9H6.3V6.6H5.1V4.9H4.4V7.8H3.2V4.9H2.5V10.2H.3z"/><g fill="#ffe7eb"><circle cx="3.3" cy="2.6" r=".5"/><circle cx="5.4" cy="2.3" r=".5"/><circle cx="6.6" cy="3.7" r=".45"/></g></svg></div>
<div class="t" style="left:1553.25px;top:468px;font-size:10px;letter-spacing:0.72px;color:#dc1f3d;font-weight:bold;">Manual</div>
<div class="dots" style="top:471px"><i style="top:0"></i><i style="top:4.5px"></i><i style="top:9px"></i></div>

<div class="abs" style="left:382px;top:513.5px"><svg width="12" height="8" viewBox="0 0 12 8"><path d="M1.5 1.4L6 5.7l4.5-4.3" fill="none" stroke="#252e39" stroke-width="1.4" stroke-linecap="round" stroke-linejoin="round"/></svg></div>
<div class="abs" style="left:399.25px;top:511.59999999999997px"><svg width="13.4" height="10.1" viewBox="0 0 15 12" preserveAspectRatio="none"><path fill="#252e39" d="M1.3 0h3.6l1.4 1.4h5.2q1.1 0 1.1 1.1v1.2H4.3q-.9 0-1.3.8L0 10V1.3Q0 0 1.3 0zM4.5 4.8h9.8q.9 0 .5.8l-2.7 5.6q-.4.8-1.3.8H.8z"/></svg></div>
<div class="t" style="left:417.51px;top:507px;font-size:12.6px;letter-spacing:-0.838px;color:#28313c;">JSON &amp; XML</div>
<div class="ln" style="top:536px"></div>

<div class="t" style="left:419.11px;top:548px;font-size:12.6px;letter-spacing:-0.278px;color:#1b222c;font-weight:bold;">JSON to XML Connector and back to JSON</div>
<div class="bdg" style="top:549px;width:109px;background:#bde0bf"></div>
<div class="abs" style="left:757.1px;top:551.9px"><svg width="10" height="10" viewBox="0 0 10 10"><circle cx="5" cy="5" r="5" fill="#0f8925"/><path d="M3 5.2l1.4 1.4 2.6-2.8" fill="none" stroke="#e4f3e5" stroke-width="1.15" stroke-linecap="round" stroke-linejoin="round"/></svg></div>
<div class="t" style="left:772.25px;top:548px;font-size:10px;letter-spacing:-0.083px;color:#0f8925;font-weight:bold;">Finished Success</div>
<div class="t" style="left:870.49px;top:548px;font-size:12.6px;letter-spacing:-0.192px;color:#1f2731;">04.10.2023, 13:38:31</div>
<div class="t" style="left:1017.83px;top:548px;font-size:12.6px;letter-spacing:-0.192px;color:#1f2731;">04.10.2023, 13:38:31</div>
<div class="t" style="left:1165.03px;top:548px;font-size:12.6px;letter-spacing:-0.192px;color:#1f2731;">04.10.2023, 13:38:31</div>
<div class="t" style="left:1311.81px;top:548px;font-size:12.6px;letter-spacing:0.0px;color:#1f2731;">132</div>
<div class="t" style="left:1422.21px;top:548px;font-size:12.6px;letter-spacing:0.0px;color:#1f2731;">18</div>
<div class="abs" style="left:1532px;top:549px;width:61px;height:16px;border-radius:2px 0 0 2px;background:linear-gradient(to right,#ffe8ec 58.5px,#fff6f7 61px)"></div>
<div class="abs" style="left:1539px;top:551.9px"><svg width="10" height="11" viewBox="0 0 10 11"><path fill="#dc1f3d" d="M.3 4.9a3.95 4.5 0 0 1 7.9 0V5.6H7.1V4.9H6.3V6.6H5.1V4.9H4.4V7.8H3.2V4.9H2.5V10.2H.3z"/><g fill="#ffe7eb"><circle cx="3.3" cy="2.6" r=".5"/><circle cx="5.4" cy="2.3" r=".5"/><circle cx="6.6" cy="3.7" r=".45"/></g></svg></div>
<div class="t" style="left:1553.25px;top:548px;font-size:10px;letter-spacing:0.72px;color:#dc1f3d;font-weight:bold;">Manual</div>
<div class="dots" style="top:551px"><i style="top:0"></i><i style="top:4.5px"></i><i style="top:9px"></i></div>

<div class="abs" style="left:382px;top:593.5px"><svg width="12" height="8" viewBox="0 0 12 8"><path d="M1.5 1.4L6 5.7l4.5-4.3" fill="none" stroke="#252e39" stroke-width="1.4" stroke-linecap="round" stroke-linejoin="round"/></svg></div>
<div class="abs" style="left:399.25px;top:591.5999999999999px"><svg width="13.4" height="10.1" viewBox="0 0 15 12" preserveAspectRatio="none"><path fill="#252e39" d="M1.3 0h3.6l1.4 1.4h5.2q1.1 0 1.1 1.1v1.2H4.3q-.9 0-1.3.8L0 10V1.3Q0 0 1.3 0zM4.5 4.8h9.8q.9 0 .5.8l-2.7 5.6q-.4.8-1.3.8H.8z"/></svg></div>
<div class="t" style="left:417.32px;top:587px;font-size:12.6px;letter-spacing:-0.063px;color:#28313c;">Xeelo connectors</div>
<div class="ln" style="top:616px"></div>

<div class="t" style="left:419.21px;top:628px;font-size:12.6px;letter-spacing:-0.074px;color:#1b222c;font-weight:bold;">Xeelo Report Connector</div>
<div class="bdg" style="top:629px;width:109px;background:#bde0bf"></div>
<div class="abs" style="left:757.1px;top:631.9px"><svg width="10" height="10" viewBox="0 0 10 10"><circle cx="5" cy="5" r="5" fill="#0f8925"/><path d="M3 5.2l1.4 1.4 2.6-2.8" fill="none" stroke="#e4f3e5" stroke-width="1.15" stroke-linecap="round" stroke-linejoin="round"/></svg></div>
<div class="t" style="left:772.25px;top:628px;font-size:10px;letter-spacing:-0.083px;color:#0f8925;font-weight:bold;">Finished Success</div>
<div class="t" style="left:870.49px;top:628px;font-size:12.6px;letter-spacing:-0.192px;color:#1f2731;">04.10.2023, 13:38:36</div>
<div class="t" style="left:1017.83px;top:628px;font-size:12.6px;letter-spacing:-0.192px;color:#1f2731;">04.10.2023, 13:38:36</div>
<div class="t" style="left:1165.03px;top:628px;font-size:12.6px;letter-spacing:-0.192px;color:#1f2731;">04.10.2023, 13:38:36</div>
<div class="t" style="left:1311.81px;top:628px;font-size:12.6px;letter-spacing:0.0px;color:#1f2731;">57</div>
<div class="t" style="left:1422.21px;top:628px;font-size:12.6px;letter-spacing:0.0px;color:#1f2731;">156</div>
<div class="abs" style="left:1532px;top:629px;width:61px;height:16px;border-radius:2px 0 0 2px;background:linear-gradient(to right,#ffe8ec 58.5px,#fff6f7 61px)"></div>
<div class="abs" style="left:1539px;top:631.9px"><svg width="10" height="11" viewBox="0 0 10 11"><path fill="#dc1f3d" d="M.3 4.9a3.95 4.5 0 0 1 7.9 0V5.6H7.1V4.9H6.3V6.6H5.1V4.9H4.4V7.8H3.2V4.9H2.5V10.2H.3z"/><g fill="#ffe7eb"><circle cx="3.3" cy="2.6" r=".5"/><circle cx="5.4" cy="2.3" r=".5"/><circle cx="6.6" cy="3.7" r=".45"/></g></svg></div>
<div class="t" style="left:1553.25px;top:628px;font-size:10px;letter-spacing:0.72px;color:#dc1f3d;font-weight:bold;">Manual</div>
<div class="dots" style="top:631px"><i style="top:0"></i><i style="top:4.5px"></i><i style="top:9px"></i></div>

<div class="t" style="left:419.21px;top:668px;font-size:12.6px;letter-spacing:0.027px;color:#1b222c;font-weight:bold;">Xeelo Import Connector</div>
<div class="bdg" style="top:669px;width:109px;background:#bde0bf"></div>
<div class="abs" style="left:757.1px;top:671.9px"><svg width="10" height="10" viewBox="0 0 10 10"><circle cx="5" cy="5" r="5" fill="#0f8925"/><path d="M3 5.2l1.4 1.4 2.6-2.8" fill="none" stroke="#e4f3e5" stroke-width="1.15" stroke-linecap="round" stroke-linejoin="round"/></svg></div>
<div class="t" style="left:772.25px;top:668px;font-size:10px;letter-spacing:-0.083px;color:#0f8925;font-weight:bold;">Finished Success</div>
<div class="t" style="left:870.49px;top:668px;font-size:12.6px;letter-spacing:-0.192px;color:#1f2731;">04.10.2023, 13:38:35</div>
<div class="t" style="left:1017.83px;top:668px;font-size:12.6px;letter-spacing:-0.192px;color:#1f2731;">04.10.2023, 13:38:36</div>
<div class="t" style="left:1165.03px;top:668px;font-size:12.6px;letter-spacing:-0.192px;color:#1f2731;">04.10.2023, 13:38:36</div>
<div class="t" style="left:1311.81px;top:668px;font-size:12.6px;letter-spacing:0.0px;color:#1f2731;">152</div>
<div class="t" style="left:1422.21px;top:668px;font-size:12.6px;letter-spacing:0.0px;color:#1f2731;">163</div>
<div class="abs" style="left:1532px;top:669px;width:61px;height:16px;border-radius:2px 0 0 2px;background:linear-gradient(to right,#ffe8ec 58.5px,#fff6f7 61px)"></div>
<div class="abs" style="left:1539px;top:671.9px"><svg width="10" height="11" viewBox="0 0 10 11"><path fill="#dc1f3d" d="M.3 4.9a3.95 4.5 0 0 1 7.9 0V5.6H7.1V4.9H6.3V6.6H5.1V4.9H4.4V7.8H3.2V4.9H2.5V10.2H.3z"/><g fill="#ffe7eb"><circle cx="3.3" cy="2.6" r=".5"/><circle cx="5.4" cy="2.3" r=".5"/><circle cx="6.6" cy="3.7" r=".45"/></g></svg></div>
<div class="t" style="left:1553.25px;top:668px;font-size:10px;letter-spacing:0.72px;color:#dc1f3d;font-weight:bold;">Manual</div>
<div class="dots" style="top:671px"><i style="top:0"></i><i style="top:4.5px"></i><i style="top:9px"></i></div>

<div class="t" style="left:419.21px;top:708px;font-size:12.6px;letter-spacing:0.1px;color:#1b222c;font-weight:bold;">Xeelo Import Attachment Connector</div>
<div class="bdg" style="top:709px;width:109px;background:#bde0bf"></div>
<div class="abs" style="left:757.1px;top:711.9px"><svg width="10" height="10" viewBox="0 0 10 10"><circle cx="5" cy="5" r="5" fill="#0f8925"/><path d="M3 5.2l1.4 1.4 2.6-2.8" fill="none" stroke="#e4f3e5" stroke-width="1.15" stroke-linecap="round" stroke-linejoin="round"/></svg></div>
<div class="t" style="left:772.25px;top:708px;font-size:10px;letter-spacing:-0.083px;color:#0f8925;font-weight:bold;">Finished Success</div>
<div class="t" style="left:870.49px;top:708px;font-size:12.6px;letter-spacing:-0.192px;color:#1f2731;">04.10.2023, 13:38:35</div>
<div class="t" style="left:1017.83px;top:708px;font-size:12.6px;letter-spacing:-0.192px;color:#1f2731;">04.10.2023, 13:38:35</div>
<div class="t" style="left:1165.03px;top:708px;font-size:12.6px;letter-spacing:-0.192px;color:#1f2731;">04.10.2023, 13:38:35</div>
<div class="t" style="left:1311.81px;top:708px;font-size:12.6px;letter-spacing:0.0px;color:#1f2731;">161</div>
<div class="t" style="left:1422.21px;top:708px;font-size:12.6px;letter-spacing:0.0px;color:#1f2731;">326</div>
<div class="abs" style="left:1532px;top:709px;width:61px;height:16px;border-radius:2px 0 0 2px;background:linear-gradient(to right,#ffe8ec 58.5px,#fff6f7 61px)"></div>
<div class="abs" style="left:1539px;top:711.9px"><svg width="10" height="11" viewBox="0 0 10 11"><path fill="#dc1f3d" d="M.3 4.9a3.95 4.5 0 0 1 7.9 0V5.6H7.1V4.9H6.3V6.6H5.1V4.9H4.4V7.8H3.2V4.9H2.5V10.2H.3z"/><g fill="#ffe7eb"><circle cx="3.3" cy="2.6" r=".5"/><circle cx="5.4" cy="2.3" r=".5"/><circle cx="6.6" cy="3.7" r=".45"/></g></svg></div>
<div class="t" style="left:1553.25px;top:708px;font-size:10px;letter-spacing:0.72px;color:#dc1f3d;font-weight:bold;">Manual</div>
<div class="dots" style="top:711px"><i style="top:0"></i><i style="top:4.5px"></i><i style="top:9px"></i></div>

<div class="t" style="left:419.21px;top:748px;font-size:12.6px;letter-spacing:-0.032px;color:#1b222c;font-weight:bold;">Xeelo Export &amp; Export Result writer</div>
<div class="bdg" style="top:749px;width:111px;background:linear-gradient(to right,#bde0bf 108.5px,#e6f3e7 111px);border-radius:2px 0 0 2px"></div>
<div class="abs" style="left:757.1px;top:751.9px"><svg width="10" height="10" viewBox="0 0 10 10"><circle cx="5" cy="5" r="5" fill="#0f8925"/><path d="M3 5.2l1.4 1.4 2.6-2.8" fill="none" stroke="#e4f3e5" stroke-width="1.15" stroke-linecap="round" stroke-linejoin="round"/></svg></div>
<div class="t" style="left:772.25px;top:748px;font-size:10px;letter-spacing:0.22px;color:#0f8925;font-weight:bold;">Finished No Data</div>
<div class="t" style="left:870.49px;top:748px;font-size:12.6px;letter-spacing:-0.192px;color:#1f2731;">04.10.2023, 13:38:34</div>
<div class="t" style="left:1017.83px;top:748px;font-size:12.6px;letter-spacing:-0.192px;color:#1f2731;">04.10.2023, 13:38:34</div>
<div class="t" style="left:1165.03px;top:748px;font-size:12.6px;letter-spacing:-0.192px;color:#1f2731;">04.10.2023, 13:38:34</div>
<div class="t" style="left:1311.81px;top:748px;font-size:12.6px;letter-spacing:0.0px;color:#1f2731;">12</div>
<div class="t" style="left:1422.21px;top:748px;font-size:12.6px;letter-spacing:0.0px;color:#1f2731;">164</div>
<div class="abs" style="left:1532px;top:749px;width:61px;height:16px;border-radius:2px 0 0 2px;background:linear-gradient(to right,#ffe8ec 58.5px,#fff6f7 61px)"></div>
<div class="abs" style="left:1539px;top:751.9px"><svg width="10" height="11" viewBox="0 0 10 11"><path fill="#dc1f3d" d="M.3 4.9a3.95 4.5 0 0 1 7.9 0V5.6H7.1V4.9H6.3V6.6H5.1V4.9H4.4V7.8H3.2V4.9H2.5V10.2H.3z"/><g fill="#ffe7eb"><circle cx="3.3" cy="2.6" r=".5"/><circle cx="5.4" cy="2.3" r=".5"/><circle cx="6.6" cy="3.7" r=".45"/></g></svg></div>
<div class="t" style="left:1553.25px;top:748px;font-size:10px;letter-spacing:0.72px;color:#dc1f3d;font-weight:bold;">Manual</div>
<div class="dots" style="top:751px"><i style="top:0"></i><i style="top:4.5px"></i><i style="top:9px"></i></div>

<div class="t" style="left:419.21px;top:788px;font-size:12.6px;letter-spacing:0.032px;color:#1b222c;font-weight:bold;">Xeelo Attachment Upload Connector</div>
<div class="bdg" style="top:789px;width:109px;background:#bde0bf"></div>
<div class="abs" style="left:757.1px;top:791.9px"><svg width="10" height="10" viewBox="0 0 10 10"><circle cx="5" cy="5" r="5" fill="#0f8925"/><path d="M3 5.2l1.4 1.4 2.6-2.8" fill="none" stroke="#e4f3e5" stroke-width="1.15" stroke-linecap="round" stroke-linejoin="round"/></svg></div>
<div class="t" style="left:772.25px;top:788px;font-size:10px;letter-spacing:-0.083px;color:#0f8925;font-weight:bold;">Finished Success</div>
<div class="t" style="left:870.49px;top:788px;font-size:12.6px;letter-spacing:-0.192px;color:#1f2731;">04.10.2023, 13:38:32</div>
<div class="t" style="left:1017.83px;top:788px;font-size:12.6px;letter-spacing:-0.192px;color:#1f2731;">04.10.2023, 13:38:32</div>
<div class="t" style="left:1165.03px;top:788px;font-size:12.6px;letter-spacing:-0.192px;color:#1f2731;">04.10.2023, 13:38:32</div>
<div class="t" style="left:1311.81px;top:788px;font-size:12.6px;letter-spacing:0.0px;color:#1f2731;">34</div>
<div class="t" style="left:1422.21px;top:788px;font-size:12.6px;letter-spacing:0.0px;color:#1f2731;">250</div>
<div class="abs" style="left:1532px;top:789px;width:61px;height:16px;border-radius:2px 0 0 2px;background:linear-gradient(to right,#ffe8ec 58.5px,#fff6f7 61px)"></div>
<div class="abs" style="left:1539px;top:791.9px"><svg width="10" height="11" viewBox="0 0 10 11"><path fill="#dc1f3d" d="M.3 4.9a3.95 4.5 0 0 1 7.9 0V5.6H7.1V4.9H6.3V6.6H5.1V4.9H4.4V7.8H3.2V4.9H2.5V10.2H.3z"/><g fill="#ffe7eb"><circle cx="3.3" cy="2.6" r=".5"/><circle cx="5.4" cy="2.3" r=".5"/><circle cx="6.6" cy="3.7" r=".45"/></g></svg></div>
<div class="t" style="left:1553.25px;top:788px;font-size:10px;letter-spacing:0.72px;color:#dc1f3d;font-weight:bold;">Manual</div>
<div class="dots" style="top:791px"><i style="top:0"></i><i style="top:4.5px"></i><i style="top:9px"></i></div>
<svg class="abs" style="left:0;top:0" width="400" height="844" viewBox="0 0 400 844"><g fill="#fff" stroke="#2f3b49" stroke-width="1.3"><rect x="324.65" y="112.95" width="13" height="13.1" rx="2.3"/><rect x="324.65" y="149.25" width="13" height="13.1" rx="2.3"/><rect x="324.65" y="189.25" width="13" height="13.1" rx="2.3"/><rect x="324.65" y="230.05" width="13" height="13.1" rx="2.3"/><rect x="324.65" y="270.05" width="13" height="13.1" rx="2.3"/><rect x="324.65" y="309.25" width="13" height="13.1" rx="2.3"/><rect x="324.65" y="349.25" width="13" height="13.1" rx="2.3"/><rect x="324.65" y="390.05" width="13" height="13.1" rx="2.3"/><rect x="324.65" y="430.05" width="13" height="13.1" rx="2.3"/><rect x="324.65" y="470.05" width="13" height="13.1" rx="2.3"/><rect x="324.65" y="509.25" width="13" height="13.1" rx="2.3"/><rect x="324.65" y="550.05" width="13" height="13.1" rx="2.3"/><rect x="324.65" y="589.25" width="13" height="13.1" rx="2.3"/><rect x="324.65" y="630.05" width="13" height="13.1" rx="2.3"/><rect x="324.65" y="670.05" width="13" height="13.1" rx="2.3"/><rect x="324.65" y="710.05" width="13" height="13.1" rx="2.3"/><rect x="324.65" y="750.05" width="13" height="13.1" rx="2.3"/><rect x="324.65" y="790.05" width="13" height="13.1" rx="2.3"/></g><g fill="none" stroke="#7d8693" stroke-width="1.3"><path d="M327 112.95h8.3"/><path d="M327 149.25h8.3"/><path d="M327 189.25h8.3"/><path d="M327 230.05h8.3"/><path d="M327 270.05h8.3"/><path d="M327 309.25h8.3"/><path d="M327 349.25h8.3"/><path d="M327 390.05h8.3"/><path d="M327 430.05h8.3"/><path d="M327 470.05h8.3"/><path d="M327 509.25h8.3"/><path d="M327 550.05h8.3"/><path d="M327 589.25h8.3"/><path d="M327 630.05h8.3"/><path d="M327 670.05h8.3"/><path d="M327 710.05h8.3"/><path d="M327 750.05h8.3"/><path d="M327 790.05h8.3"/></g></svg>
<svg class="abs" style="left:1640px;top:0" width="3" height="844" viewBox="1640 0 3 844"><rect x="1641.75" y="0" width="1.3" height="844" fill="#1d3a6e"/></svg>
<svg class="abs" style="left:290px;top:28px" width="34" height="32" viewBox="290 28 34 32"><circle cx="307.05" cy="43.9" r="11.4" fill="#fff" stroke="#c6cacf" stroke-width="1"/><path d="M308.6 39.2l-4.5 4.5 4.5 4.5" fill="none" stroke="#3a4450" stroke-width="1.25" stroke-linecap="round" stroke-linejoin="round"/></svg>
<svg class="abs" style="left:200px;top:85px" width="110" height="110" viewBox="200 85 110 110"><path d="M215.6 178.4L216 178L286.5 109.5" stroke="#0450ee" stroke-width="10" stroke-linecap="round" stroke-linejoin="round" fill="none"/><path d="M300.6 93.4L269.7 103.8L283.5 110.5L290.3 123.6z" fill="#0450ee"/></svg>
</div>
</body>
</html>
